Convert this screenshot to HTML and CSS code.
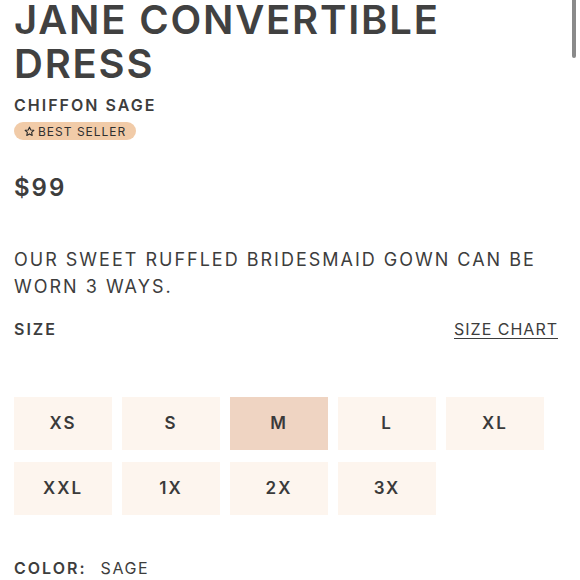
FILE: index.html
```html
<!DOCTYPE html>
<html>
<head>
<meta charset="utf-8">
<link rel="stylesheet" href="styles.css">
</head>
<body>
<div class="scrollbar"></div>
<main class="product">
  <h1 class="title">JANE CONVERTIBLE DRESS</h1>
  <p class="variant">CHIFFON SAGE</p>
  <span class="badge"><svg class="star" viewBox="0 0 24 24" width="11" height="11"><path d="M12 2.5l2.9 6.1 6.6.8-4.9 4.6 1.3 6.6L12 17.3l-5.9 3.3 1.3-6.6-4.9-4.6 6.6-.8z" fill="none" stroke="#2b2b2b" stroke-width="2.4" stroke-linejoin="round"/></svg>BEST SELLER</span>
  <p class="price">$99</p>
  <p class="desc">OUR SWEET RUFFLED BRIDESMAID GOWN CAN BE WORN 3 WAYS.</p>
  <div class="size-head">
    <span class="label">SIZE</span>
    <a class="chart">SIZE CHART</a>
  </div>
  <div class="sizes">
    <div class="size">XS</div>
    <div class="size">S</div>
    <div class="size selected">M</div>
    <div class="size">L</div>
    <div class="size">XL</div>
    <div class="size">XXL</div>
    <div class="size">1X</div>
    <div class="size">2X</div>
    <div class="size">3X</div>
  </div>
  <div class="color-row">
    <span class="label">COLOR:</span>
    <span class="color-val">SAGE</span>
  </div>
</main>
</body>
</html>
```
FILE: styles.css
```css
html, body {
  margin: 0;
  padding: 0;
  background: #ffffff;
  overflow: hidden;
}
body {
  font-family: Inter, "Liberation Sans", sans-serif;
  color: #414141;
}
.scrollbar {
  position: absolute;
  top: 0;
  left: 572px;
  width: 4px;
  height: 58px;
  background: #8a8a8a;
  border-radius: 0 0 2px 2px;
}
.product {
  padding: 0 14px;
}
.title {
  margin: -2px 0 0 0;
  font-size: 40px;
  line-height: 44px;
  font-weight: 600;
  letter-spacing: 1.8px;
  color: #414141;
  width: 460px;
}
.variant {
  margin: 9px 0 0 0;
  font-size: 16px;
  line-height: 20px;
  font-weight: 600;
  letter-spacing: 2px;
  color: #3d3d3d;
}
.badge {
  display: inline-flex;
  align-items: center;
  gap: 3px;
  margin-top: 7px;
  height: 18px;
  padding: 0 10px 0 10px;
  border-radius: 9px;
  background: #f1cba8;
  font-size: 12px;
  letter-spacing: 1px;
  color: #2f2f2f;
}
.price {
  margin: 32px 0 0 0;
  font-size: 24px;
  line-height: 30px;
  font-weight: 600;
  letter-spacing: 2px;
  color: #3d3d3d;
}
.desc {
  margin: 43px 0 0 0;
  font-size: 18px;
  line-height: 27px;
  letter-spacing: 2px;
  color: #3d3d3d;
  width: 545px;
}
.size-head {
  display: flex;
  justify-content: space-between;
  align-items: baseline;
  margin-top: 19px;
  width: 544px;
}
.label {
  font-size: 16px;
  font-weight: 600;
  letter-spacing: 2px;
  color: #3d3d3d;
}
.chart {
  font-size: 16px;
  letter-spacing: 1px;
  color: #3d3d3d;
  text-decoration: underline;
  text-underline-offset: 3px;
}
.sizes {
  display: grid;
  grid-template-columns: repeat(5, 98px);
  column-gap: 10px;
  row-gap: 12px;
  margin-top: 58px;
}
.size {
  height: 53px;
  display: flex;
  align-items: center;
  justify-content: center;
  background: #fdf5ee;
  font-size: 17px;
  font-weight: 600;
  letter-spacing: 2px;
  color: #3a3a3a;
}
.size.selected {
  background: #efd4c2;
}
.color-row {
  margin-top: 43px;
  display: flex;
  align-items: baseline;
  gap: 14px;
}
.color-val {
  font-size: 16px;
  letter-spacing: 1.6px;
  color: #3d3d3d;
}
```
